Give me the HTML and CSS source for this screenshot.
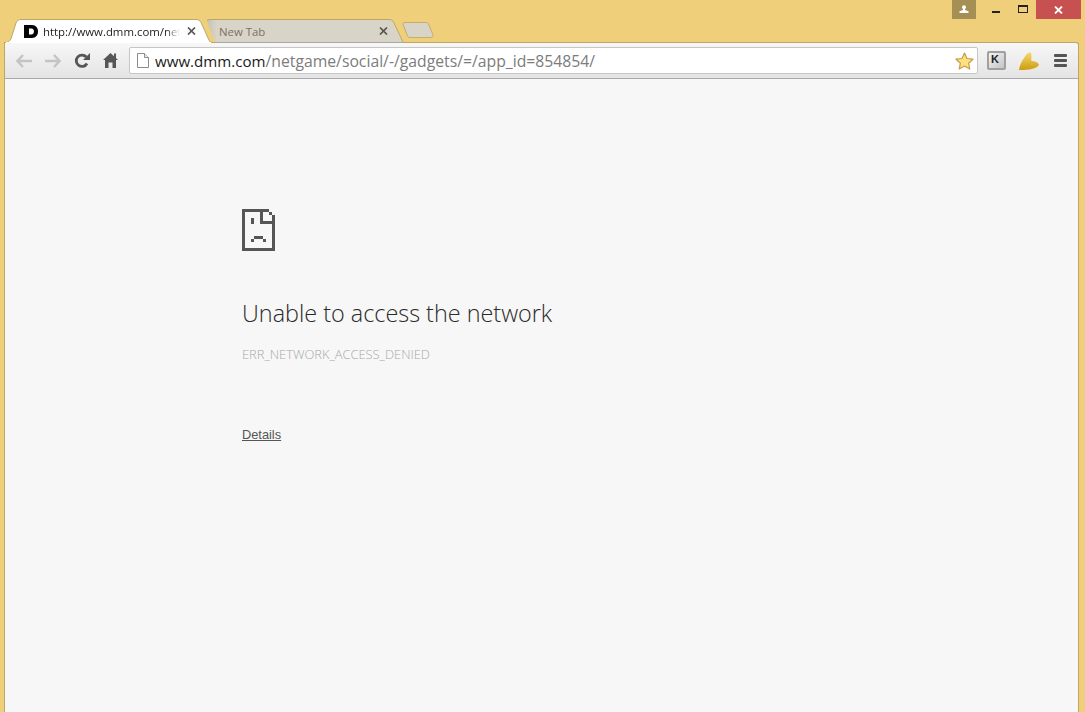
FILE: index.html
```html
<!DOCTYPE html>
<html lang="en">
<head>
<meta charset="utf-8">
<title>www.dmm.com</title>
<link rel="stylesheet" href="styles.css">
</head>
<body>
<div class="window">
  <div class="controls">
    <div class="profile"><svg width="10" height="9" viewBox="0 0 10 9"><path d="M3 2.200a2 2 0 1 1 4 0a2 2 0 0 1-1 1.900v.8l3.500 1.300V8H.5V6.200L4 4.900v-.8a2 2 0 0 1-1-1.900z" fill="#fff"/></svg></div>
    <div class="win-btn min"><svg width="8" height="2" viewBox="0 0 8 2"><rect width="8" height="2" fill="#222"/></svg></div>
    <div class="win-btn max"><svg width="10" height="8" viewBox="0 0 10 8"><path d="M0 0h10v8H0z M1 2v5h8V2z" fill="#222" fill-rule="evenodd"/></svg></div>
    <div class="close"><svg width="9" height="8" viewBox="0 0 9 8"><path d="M1 .5L8 7.500M8 .5L1 7.500" stroke="#fff" stroke-width="1.800"/></svg></div>
  </div>
  <div class="tabstrip">
    <div class="tab active">
      <svg class="tab-bg" width="208" height="25" viewBox="0 0 208 25"><path d="M0 24.500H1C3 24.500 5 23 6 20.500L11 5C12 2.500 13.500 1.500 16 1.500H191C193.500 1.500 195 2.500 196 4.500L204 22C204.800 23.700 205.500 24.500 207 24.500" fill="#fff" stroke="#bda766"/><rect y="24" x="1" width="205" height="1" fill="#fff"/></svg>
      <svg class="favicon" width="14" height="13" viewBox="0 0 14 13"><path d="M0 0H8C12 0 14 3 14 6.500S12 13 8 13H0zM5 3.500V9.500H7.500C9 9.500 10 8 10 6.500S9 3.500 7.500 3.500z" fill="#050505" fill-rule="evenodd"/></svg>
      <span class="tab-title">http://www.dmm.com/net</span>
      <svg class="tab-close" width="9" height="8" viewBox="0 0 9 8"><path d="M1 .5L8 7.500M8 .5L1 7.500" stroke="#555" stroke-width="1.700"/></svg>
    </div>
    <div class="tab inactive">
      <svg class="tab-bg" width="197" height="25" viewBox="0 0 197 25"><defs><linearGradient id="tabshade" x1="0" y1="0" x2="1" y2="0"><stop offset="0" stop-color="#c6c3b6"/><stop offset=".05" stop-color="#d8d5c8"/></linearGradient></defs><path d="M0 3C0 1.800 1.500 1 4 1H181C184 1 185.500 2 186.500 4L196 24H11C9 24 8 23.500 7 21.500z" fill="url(#tabshade)"/><path d="M0 3C0 1.800 1.500 1.500 4 1.500H181C184 1.500 185.500 2 186.500 4L196 24" fill="none" stroke="#bda766"/><rect x="9" y="24" width="188" height="1" fill="#a9a9a2"/></svg>
      <span class="tab-title plain">New Tab</span>
      <svg class="tab-close" width="9" height="8" viewBox="0 0 9 8"><path d="M1 .5L8 7.500M8 .5L1 7.500" stroke="#555" stroke-width="1.700"/></svg>
    </div>
    <svg class="newtab" width="32" height="16" viewBox="0 0 32 16"><path d="M1 2.500C.5 1.500 1.500 .5 3 .5H24C25.500 .5 26 1 26.500 2L31 13C31.500 14.500 30.500 15.500 29 15.500H8C6.500 15.500 6 15 5.500 14z" fill="#d8d5c8" stroke="#c6ae6a"/></svg>
  </div>
  <div class="toolbar">
    <svg width="16" height="14" viewBox="0 0 16 14"><path d="M7 1L1.500 7L7 13M2 7H16" fill="none" stroke="#c4c4c4" stroke-width="2.400"/></svg>
    <svg width="16" height="14" viewBox="0 0 16 14"><path d="M9 1L14.500 7L9 13M14 7H0" fill="none" stroke="#c4c4c4" stroke-width="2.400"/></svg>
    <svg width="16" height="16" viewBox="0 0 16 16"><path d="M13 10.500A5.700 5.700 0 1 1 12.300 4" fill="none" stroke="#565656" stroke-width="2.800"/><path d="M9 7H16V0z" fill="#565656"/></svg>
    <svg width="15" height="15" viewBox="0 0 15 15"><path d="M7.500 0L11 3.200V.5H13V5L15 7H13V15H9.500V9.500H5.500V15H2V7H0z" fill="#565656"/></svg>
    <div class="omnibox">
      <svg class="page-icon" width="12" height="15" viewBox="0 0 12 15"><path d="M.5.500H7.500L11.500 4.500V14.500H.5z" fill="#fff" stroke="#8c8c8c"/><path d="M7.500.5V4.500H11.500" fill="#eee" stroke="#8c8c8c"/></svg>
      <span class="url"><span class="host">www.dmm.com</span>/netgame/social/-/gadgets/=/app_id=854854/</span>
      <svg class="star" width="19" height="18" viewBox="0 0 19 18"><path d="M9.500 1L12 6.500L18 7.200L13.600 11.200L14.800 17L9.500 14L4.200 17L5.400 11.200L1 7.200L7 6.500z" fill="#fbe27f" stroke="#c99a4a" stroke-width="1.200" stroke-linejoin="round"/></svg>
    </div>
    <div class="ext-k"><span>K</span></div>
    <svg class="ext-leaf" width="20" height="18" viewBox="0 0 20 18"><defs><linearGradient id="leaf" x1="0" y1="0" x2="0" y2="1"><stop offset="0" stop-color="#f5d86a"/><stop offset="1" stop-color="#cf9c10"/></linearGradient></defs><path d="M0 18C1 11 4 8 7 3C8 1 11 0 12 1C13 3 12 7 12.500 9C15 9 19 10 20 12.500C19.500 15 15 17 10 17.500C6 18 2 18 0 18z" fill="url(#leaf)"/></svg>
    <div class="menu"><i></i><i></i><i></i></div>
  </div>
  <main class="page">
    <svg class="sad" width="33" height="42" viewBox="0 0 11 14" shape-rendering="crispEdges"><path d="M0 0H9V1H10V2H11V14H0zM1 1V13H10V5H6V1zM7 1V4H10V2H9V1zM3 3H4V5H3zM4 9H7V10H8V11H7V10H4V11H3V10H4z" fill="#565656" fill-rule="evenodd"/></svg>
    <h1>Unable to access the network</h1>
    <p class="code">ERR_NETWORK_ACCESS_DENIED</p>
    <a class="details" href="#">Details</a>
  </main>
</div>
</body>
</html>
```
FILE: styles.css
```css
html, body {
  margin: 0;
  height: 100%;
}
body {
  overflow: hidden;
  font-family: "Open Sans", "Liberation Sans", sans-serif;
}
.window {
  position: relative;
  display: flex;
  flex-direction: column;
  height: 712px;
  padding: 0 6px 0 4px;
  box-sizing: border-box;
  background: #efcf7a;
}
.controls {
  position: absolute;
  top: 0;
  right: 4px;
  display: flex;
  height: 19px;
}
.controls > div {
  display: flex;
  align-items: center;
  justify-content: center;
}
.profile {
  width: 24px;
  background: #a68f55;
  margin-right: 6px;
}
.win-btn {
  width: 27px;
}
.min svg {
  margin-top: 4px;
}
.max svg {
  margin-top: -1px;
}
.close {
  width: 45px;
  background: #c75050;
}
.tabstrip {
  display: flex;
  align-items: flex-end;
  height: 42px;
  padding-left: 1px;
  position: relative;
  z-index: 1;
}
.tab {
  position: relative;
  display: flex;
  align-items: center;
  height: 25px;
  margin-bottom: -1px;
  box-sizing: border-box;
  font-size: 11.4px;
}
.tab-bg {
  position: absolute;
  left: 0;
  top: 0;
}
.tab > :not(.tab-bg) {
  position: relative;
}
.active {
  width: 207px;
  padding: 1px 0 0 19px;
  z-index: 2;
}
.inactive {
  width: 196px;
  padding: 1px 0 0 12px;
  margin-left: -5px;
  z-index: 1;
}
.favicon {
  flex: none;
  margin-right: 5px;
}
.tab-title {
  display: block;
  width: 137px;
  white-space: nowrap;
  color: #222;
  font-family: "Open Sans", sans-serif;
  -webkit-mask-image: linear-gradient(to right, #000 90%, transparent);
  mask-image: linear-gradient(to right, #000 90%, transparent);
}
.tab-title.plain {
  width: 148px;
  color: #7d6f65;
  -webkit-mask-image: none;
  mask-image: none;
}
.tab-close {
  flex: none;
  margin-left: 7px;
}
.inactive .tab-close {
  margin-left: 12px;
}
.newtab {
  flex: none;
  margin: 0 0 4px -1px;
}
.toolbar {
  display: flex;
  align-items: center;
  height: 37px;
  flex: none;
  gap: 13px;
  box-sizing: border-box;
  padding: 0 11px;
  border: 1px solid #bda766;
  border-bottom-color: #a9a9a9;
  border-top-right-radius: 3px;
  background: linear-gradient(#f7f7f7, #e4e4e4);
}
.omnibox {
  flex: 1;
  display: flex;
  align-items: center;
  height: 27px;
  box-sizing: border-box;
  margin: 0 -4px 0 -2px;
  padding: 0 3px 0 7px;
  border: 1px solid #c6c6c6;
  border-radius: 2px;
  background: #fff;
}
.page-icon {
  flex: none;
  margin-right: 6px;
}
.url {
  flex: 1;
  font-size: 15.75px;
  white-space: nowrap;
  color: #7c7c7c;
}
.host {
  font-size: 15.1px;
  color: #1a1a1a;
}
.ext-k {
  width: 19px;
  height: 19px;
  box-sizing: border-box;
  display: flex;
  align-items: flex-start;
  padding: 1px 0 0 2px;
  border: 2px solid #a0a0a0;
  border-radius: 2px;
  background: linear-gradient(135deg, #f4f4f4, #c4c4c4);
  font-family: "Liberation Sans", sans-serif;
  font-size: 11px;
  font-weight: bold;
  line-height: 11px;
  color: #222;
}
.ext-leaf {
  flex: none;
}
.menu {
  display: flex;
  flex-direction: column;
  gap: 2px;
  width: 13px;
  margin-left: 2px;
}
.menu i {
  display: block;
  height: 3px;
  border-radius: 1px;
  background: #555;
}
.page {
  flex: 1;
  display: flex;
  flex-direction: column;
  align-items: flex-start;
  padding: 130px 0 0 237px;
  border: solid #bda766;
  border-width: 0 1px;
  background: #f7f7f7;
}
.sad {
  flex: none;
}
h1 {
  margin: 45px 0 0;
  font-size: 23.4px;
  font-weight: 300;
  line-height: 34px;
  color: #2a2a2a;
}
.code {
  margin: 16px 0 0;
  font-size: 12.9px;
  line-height: 16px;
  font-weight: 300;
  color: #a8a8a8;
}
.details {
  margin-top: 65px;
  font-family: "Liberation Sans", sans-serif;
  font-size: 12.8px;
  line-height: 16px;
  color: #555;
}
```
